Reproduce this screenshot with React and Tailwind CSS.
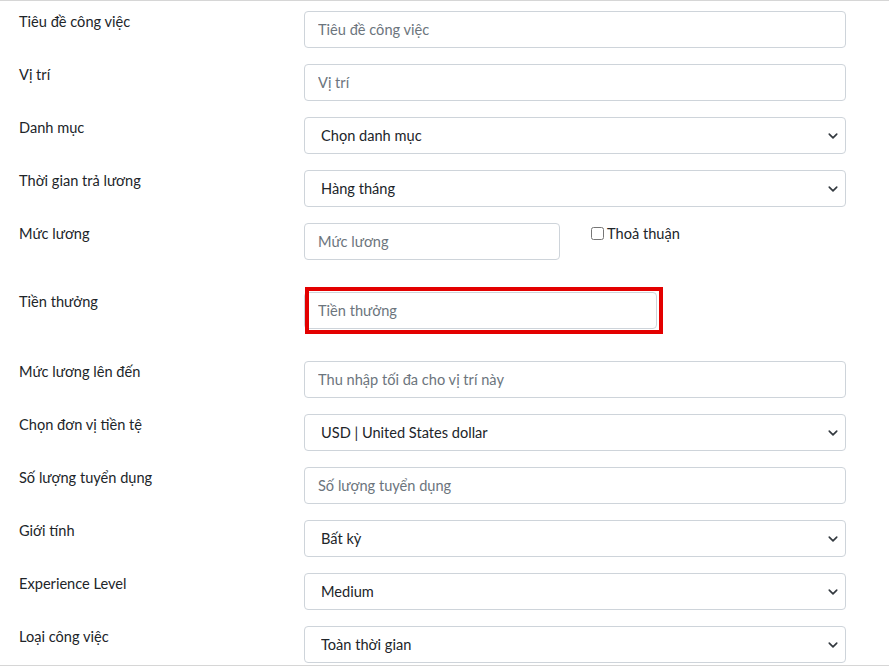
import React from 'react';

const font = { fontFamily: 'Lato, "Noto Sans", sans-serif' };

function Chevron() {
  return (
    <svg
      className="pointer-events-none absolute right-[8px] top-1/2 -translate-y-1/2"
      width="10"
      height="10"
      viewBox="0 0 16 16"
    >
      <path d="M2 5l6 6 6-6" fill="none" stroke="#343a40" strokeWidth="2.6" strokeLinecap="round" strokeLinejoin="round" />
    </svg>
  );
}

function TextInput({ placeholder, className = '' }) {
  return (
    <input
      type="text"
      placeholder={placeholder}
      className={`h-[37px] w-full rounded border border-[#ced4da] bg-white px-[13px] text-[14.6px] text-[#495057] placeholder:text-[#6c757d] outline-none ${className}`}
    />
  );
}

function SelectInput({ value }) {
  return (
    <div className="relative">
      <select
        defaultValue={value}
        className="h-[37px] w-full appearance-none rounded border border-[#ced4da] bg-white pl-[16px] pr-8 text-[14.6px] text-[#212529] outline-none"
      >
        <option>{value}</option>
      </select>
      <Chevron />
    </div>
  );
}

function Row({ label, children, className = 'mb-[16px]' }) {
  return (
    <div className={`flex ${className}`}>
      <label className="w-[304px] shrink-0 pl-[19px] text-[14.6px] leading-[21px] text-[#212529]">{label}</label>
      <div className="w-[542px]">{children}</div>
    </div>
  );
}

export default function App() {
  return (
    <div className="min-h-[672px] bg-white" style={font}>
      <div className="border-y border-[#d6d6d6] pb-[2px] pt-[10px]">
        <Row label="Tiêu đề công việc">
          <TextInput placeholder="Tiêu đề công việc" />
        </Row>
        <Row label="Vị trí">
          <TextInput placeholder="Vị trí" />
        </Row>
        <Row label="Danh mục">
          <SelectInput value="Chọn danh mục" />
        </Row>
        <Row label="Thời gian trả lương">
          <SelectInput value="Hàng tháng" />
        </Row>
        <Row label="Mức lương" className="mb-[31px]">
          <div className="flex items-start">
            <div className="w-[256px]">
              <TextInput placeholder="Mức lương" />
            </div>
            <label className="ml-[31px] flex items-center gap-[3px] text-[14.6px] leading-[21px] text-[#212529]">
              <input type="checkbox" className="h-[13px] w-[13px]" />
              Thoả thuận
            </label>
          </div>
        </Row>
        <Row label="Tiền thưởng" className="mb-[32px]">
          <div className="relative mt-[1px] w-[353px]">
            <TextInput placeholder="Tiền thưởng" />
            <div className="pointer-events-none absolute left-[1px] top-[-5px] h-[47px] w-[358px] border-4 border-[#e30000]" />
          </div>
        </Row>
        <Row label="Mức lương lên đến">
          <TextInput placeholder="Thu nhập tối đa cho vị trí này" />
        </Row>
        <Row label="Chọn đơn vị tiền tệ">
          <SelectInput value="USD | United States dollar" />
        </Row>
        <Row label="Số lượng tuyển dụng">
          <TextInput placeholder="Số lượng tuyển dụng" />
        </Row>
        <Row label="Giới tính">
          <SelectInput value="Bất kỳ" />
        </Row>
        <Row label="Experience Level">
          <SelectInput value="Medium" />
        </Row>
        <Row label="Loại công việc" className="mb-0">
          <SelectInput value="Toàn thời gian" />
        </Row>
      </div>
    </div>
  );
}
